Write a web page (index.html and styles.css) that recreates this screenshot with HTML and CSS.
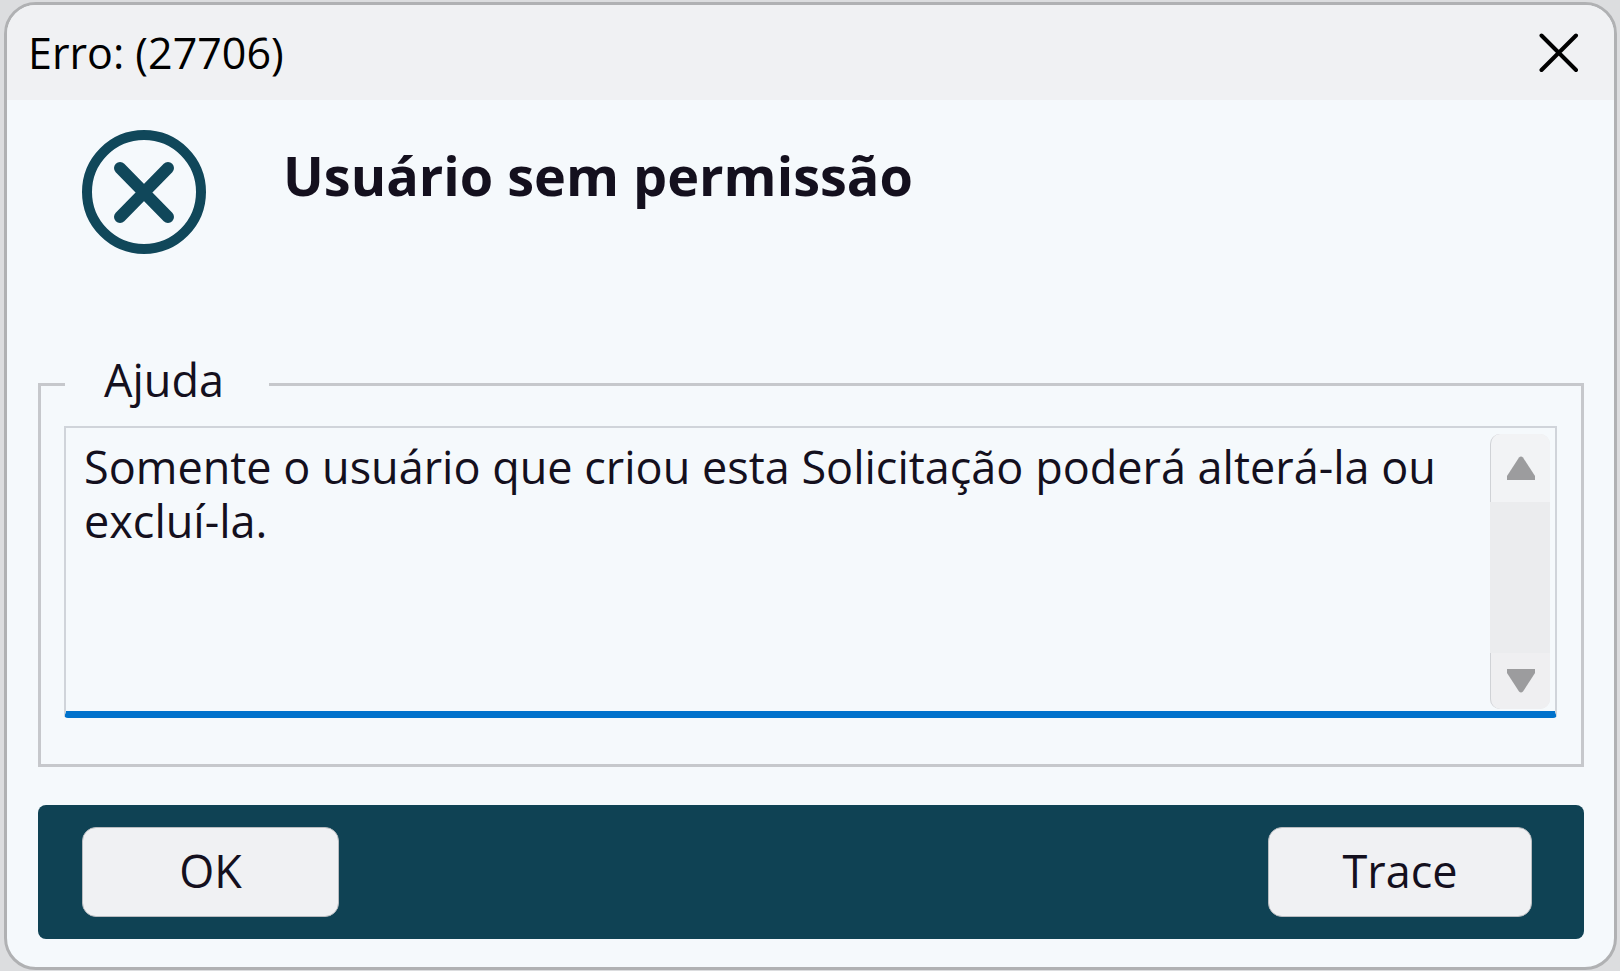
FILE: index.html
```
<!DOCTYPE html>
<html lang="pt-BR">
<head>
    <meta charset="UTF-8">
    <meta name="viewport" content="width=device-width, initial-scale=1.0">
    <title>Erro: (27706)</title>
    <link rel="stylesheet" href="styles.css">
</head>
<body>
    <div class="dialog" role="alertdialog" aria-labelledby="dialog-title" aria-describedby="message">
        <header class="titlebar">
            <span class="title" id="dialog-title">Erro: (27706)</span>
            <button class="close" type="button" aria-label="Fechar">
                <svg width="40" height="40" viewBox="0 0 40 40" fill="none" stroke="#000" stroke-width="4" stroke-linecap="round">
                    <path d="M2.5 2.5 37 37M37 2.5 2.5 37"/>
                </svg>
            </button>
        </header>
        <main class="content">
            <div class="message">
                <svg class="error-icon" width="126" height="126" viewBox="0 0 126 126" fill="none" stroke="#10475a">
                    <circle cx="63" cy="63" r="57" stroke-width="10"/>
                    <path d="M39 39 87 88M87 39 39 88" stroke-width="12" stroke-linecap="round"/>
                </svg>
                <h1 id="message">Usuário sem permissão</h1>
            </div>
            <fieldset class="help">
                <legend>Ajuda</legend>
                <div class="textbox">
                    <textarea rows="5" readonly aria-label="Ajuda">Somente o usuário que criou esta Solicitação poderá alterá-la ou excluí-la.</textarea>
                    <div class="scrollbar">
                        <button class="scroll up" type="button" aria-label="Rolar para cima">
                            <svg width="30" height="24" viewBox="0 0 30 24" fill="#9c9c9e"><path d="M13 1.5Q15-.5 17 1.5L29 20V24H1V20Z"/></svg>
                        </button>
                        <button class="scroll down" type="button" aria-label="Rolar para baixo">
                            <svg width="30" height="24" viewBox="0 0 30 24" fill="#9c9c9e"><path d="M1 0H29V4L17 22.5Q15 24.5 13 22.5L1 4Z"/></svg>
                        </button>
                    </div>
                </div>
            </fieldset>
            <footer class="actions">
                <button class="btn" type="button">OK</button>
                <button class="btn btn-trace" type="button">Trace</button>
            </footer>
        </main>
    </div>
</body>
</html>
```

FILE: styles.css
```
* {
    box-sizing: border-box;
}
body {
    display: flex;
    min-height: 100vh;
    margin: 0;
    padding: 2px 3px 1px 4px;
    background-color: #dcdddf;
    color: #14101e;
    font-family: "Open Sans", "Segoe UI", sans-serif;
    font-size: 45px;
    line-height: 54px;
}
button, textarea {
    padding: 0;
    border: none;
    background: none;
    color: inherit;
    font: inherit;
}
button {
    cursor: pointer;
}
svg {
    display: block;
}
.dialog {
    display: flex;
    flex: 1;
    flex-direction: column;
    min-width: 0;
    overflow: hidden;
    border: 3px solid #b0b1b3;
    border-radius: 32px;
    background-color: #f5f9fc;
}
.titlebar {
    display: flex;
    align-items: center;
    justify-content: space-between;
    padding: 21px 35px 20px 21px;
    background-color: #f0f1f3;
    color: #000;
}
.title {
    font-size: 43px;
}
.content {
    display: flex;
    flex: 1;
    flex-direction: column;
    padding: 0 30px 28px 31px;
}
.message {
    display: flex;
    flex: 1;
    align-items: flex-start;
    gap: 76px;
    padding: 29px 43px;
}
.error-icon {
    flex: none;
}
h1 {
    margin: 13px 0 0;
    font-size: 54px;
    line-height: 66px;
}
.help {
    min-width: 0;
    margin: 0 0 38px;
    padding: 10px 24px 46px 23px;
    border: 3px solid #c6c8cc;
}
.help legend {
    margin-left: 1px;
    padding: 0 45px 9px 39px;
}
.textbox {
    display: flex;
    border: 2px solid #d0d4da;
    border-bottom: 7px solid #0072cc;
    border-radius: 0 0 4px 4px;
}
.textbox textarea {
    flex: 1;
    min-width: 0;
    padding: 12px 40px 1px 18px;
    outline: none;
    overflow: hidden;
    resize: none;
}
.scrollbar {
    display: flex;
    flex: none;
    flex-direction: column;
    justify-content: space-between;
    width: 60px;
    margin: 6px 5px 2px 0;
    border-radius: 10px;
    background-color: #ebecee;
}
.scroll {
    display: flex;
    align-items: center;
    justify-content: center;
    border-left: 1px solid #d0d2d6;
}
.up {
    height: 68px;
    border-radius: 10px 10px 0 0;
    background-color: #f2f3f5;
}
.down {
    height: 56px;
    border-radius: 0 0 10px 10px;
    background-color: #efeff1;
}
.actions {
    display: flex;
    justify-content: space-between;
    padding: 22px 52px 22px 44px;
    border-radius: 8px;
    background-color: #0f4254;
}
.btn {
    min-width: 257px;
    padding: 16px 40px 18px;
    border: 1px solid #b9bcc0;
    border-radius: 14px;
    background-color: #f0f1f3;
}
.btn-trace {
    min-width: 264px;
}
```
